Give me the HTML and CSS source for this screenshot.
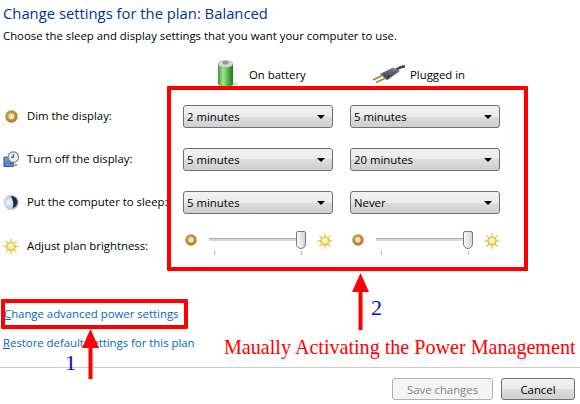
FILE: index.html
```html
<!DOCTYPE html>
<html lang="en">
<head>
<meta charset="utf-8">
<title>Change settings for the plan</title>
<link rel="stylesheet" href="styles.css">
</head>
<body>
<svg class="defs" width="0" height="0" aria-hidden="true">
  <defs>
    <radialGradient id="donut" cx="45%" cy="40%" r="60%"><stop offset="0" stop-color="#f0cf80"/><stop offset="1" stop-color="#b58428"/></radialGradient>
    <radialGradient id="sunfill" cx="50%" cy="45%" r="55%"><stop offset="0" stop-color="#fffbe0"/><stop offset="0.55" stop-color="#fdf0a0"/><stop offset="1" stop-color="#e8b830"/></radialGradient>
    <linearGradient id="cell" x1="0" x2="1" y1="0" y2="0"><stop offset="0" stop-color="#3f9a3c"/><stop offset="0.35" stop-color="#a6e38f"/><stop offset="0.7" stop-color="#45b03c"/><stop offset="1" stop-color="#1f7a24"/></linearGradient>
    <linearGradient id="plugbody" x1="0" x2="0" y1="0" y2="1"><stop offset="0" stop-color="#7d828d"/><stop offset="1" stop-color="#2f323a"/></linearGradient>
    <linearGradient id="screen" x1="0" x2="1" y1="0" y2="1"><stop offset="0" stop-color="#7fa6e6"/><stop offset="1" stop-color="#2d5bb5"/></linearGradient>
    <radialGradient id="orb" cx="35%" cy="50%" r="65%"><stop offset="0" stop-color="#f4f6fa"/><stop offset="0.7" stop-color="#b9c6dc"/><stop offset="1" stop-color="#8c9cb8"/></radialGradient>
    <symbol id="i-donut" viewBox="0 0 13 13"><circle cx="6.5" cy="6.5" r="4.4" fill="none" stroke="url(#donut)" stroke-width="3.6"/><circle cx="6.5" cy="6.5" r="2.2" fill="#e4e0d6"/></symbol>
    <symbol id="i-sun" viewBox="0 0 16 16"><g stroke="#ecd070" stroke-width="1.6" stroke-linecap="round"><path d="M8 .8v2M8 13.2v2M.8 8h2M13.2 8h2M2.9 2.9l1.4 1.4M11.7 11.7l1.4 1.4M2.9 13.1l1.4-1.4M11.7 4.3l1.4-1.4"/></g><circle cx="8" cy="8" r="4.3" fill="url(#sunfill)" stroke="#dca92c" stroke-width=".8"/></symbol>
    <symbol id="i-clock" viewBox="0 0 17 18"><path d="M1 6.5h10v10H1z" fill="url(#screen)" stroke="#2b4f9a"/><path d="M3 15h12" stroke="#7f8fb0" stroke-width="1.6"/><circle cx="11" cy="6.5" r="5.6" fill="#e8edf2" stroke="#75808c" stroke-width="1.2"/><path d="M11 3.3v3.4h-2.6" fill="none" stroke="#2a3550" stroke-width="1.1"/></symbol>
    <symbol id="i-moon" viewBox="0 0 17 17"><circle cx="8.5" cy="8.5" r="8" fill="url(#orb)"/><path d="M8.5 2c3.5-.4 6.7 2 6.7 6 0 3.600-2.400 5.800-5 6.300 1.500-3 .8-8.300-1.700-12.300z" fill="#1d2740"/></symbol>
    <symbol id="i-battery" viewBox="0 0 22 27"><ellipse cx="13" cy="24" rx="8" ry="2.500" fill="#c9c9c9" opacity=".7"/><path d="M1 4v20c0 1.500 3 2.500 7.500 2.500S16 25.500 16 24V4z" fill="url(#cell)"/><ellipse cx="8.500" cy="4" rx="7.500" ry="3.400" fill="#d5dcd8" stroke="#8aa58c" stroke-width=".6"/><ellipse cx="8.500" cy="2.800" rx="3" ry="1.800" fill="#8b9698"/></symbol>
    <symbol id="i-plug" viewBox="0 0 33 18"><path d="M23 6C26 3 29 1.500 33 1.500" fill="none" stroke="#3c4048" stroke-width="2.600"/><path d="M8 9 21 2.500 28 6 15 15z" fill="url(#plugbody)"/><path d="M1 15 11 10M4 17.500 14 13" stroke="#ad8436" stroke-width="1.800"/></symbol>
  </defs>
</svg>

<div class="page">
  <h1 class="title">Change settings for the plan: Balanced</h1>
  <p class="intro">Choose the sleep and display settings that you want your computer to use.</p>

  <div class="grid">
    <div></div>
    <div class="colhead colhead-battery"><svg class="ico-battery"><use href="#i-battery"/></svg><span>On battery</span></div>
    <div class="colhead colhead-plug"><svg class="ico-plug"><use href="#i-plug"/></svg><span>Plugged in</span></div>

    <div class="label"><svg class="ico ico-sm"><use href="#i-donut"/></svg><span>Dim the display:</span></div>
    <div class="select"><span>2 minutes</span><i class="caret"></i></div>
    <div class="select"><span>5 minutes</span><i class="caret"></i></div>

    <div class="label"><svg class="ico"><use href="#i-clock"/></svg><span>Turn off the display:</span></div>
    <div class="select"><span>5 minutes</span><i class="caret"></i></div>
    <div class="select"><span>20 minutes</span><i class="caret"></i></div>

    <div class="label"><svg class="ico"><use href="#i-moon"/></svg><span>Put the computer to sleep:</span></div>
    <div class="select"><span>5 minutes</span><i class="caret"></i></div>
    <div class="select"><span>Never</span><i class="caret"></i></div>

    <div class="label"><svg class="ico"><use href="#i-sun"/></svg><span>Adjust plan brightness:</span></div>
    <div class="slider">
      <svg class="donut"><use href="#i-donut"/></svg>
      <div class="track"><i class="tick tick-a"></i><i class="tick tick-b"></i><i class="thumb"></i></div>
      <svg class="sun"><use href="#i-sun"/></svg>
    </div>
    <div class="slider">
      <svg class="donut"><use href="#i-donut"/></svg>
      <div class="track"><i class="tick tick-a"></i><i class="tick tick-b"></i><i class="thumb"></i></div>
      <svg class="sun"><use href="#i-sun"/></svg>
    </div>
  </div>

  <div class="links">
    <a class="link link-advanced" href="#"><u>C</u>hange advanced power settings</a>
    <a class="link" href="#"><u>R</u>estore default settings for this plan</a>
  </div>

  <div class="footer">
    <button class="btn btn-disabled" type="button" disabled>Save changes</button>
    <button class="btn" type="button">Cancel</button>
  </div>

  <div class="mark mark-main"></div>
  <div class="mark mark-link"></div>
  <svg class="arrow arrow-1" viewBox="0 0 17 51"><path d="M8.500 0 17 19H10.500V50H6.500V19H0z" fill="#f00"/></svg>
  <svg class="arrow arrow-2" viewBox="0 0 17 58"><path d="M8.500 0 17 19H10.500V57H6.500V19H0z" fill="#f00"/></svg>
  <span class="note note-1">1</span>
  <span class="note note-2">2</span>
  <span class="caption">Maually Activating the Power Management</span>
</div>
</body>
</html>
```
FILE: styles.css
```css
* { box-sizing: border-box; }
html, body { margin: 0; padding: 0; background: #fff; }
body { font-family: "Open Sans", "Noto Sans", sans-serif; font-size: 11.35px; color: #000; }
.defs { position: absolute; }
.page { position: relative; width: 580px; height: 404px; overflow: hidden; display: flex; flex-direction: column; }

.title { margin: 0; padding-left: 3px; height: 28px; font-size: 14.8px; line-height: 26px; font-weight: 400; color: #003399; white-space: nowrap; }
.intro { margin: 0; padding-left: 3px; height: 32px; line-height: 15px; white-space: nowrap; }

.grid { display: grid; grid-template-columns: 163px 150px 150px; column-gap: 17px; grid-template-rows: 25px 23px 23px 23px 25px; row-gap: 20px; padding-left: 3px; }
.colhead { display: flex; align-items: center; height: 26px; }
.colhead-battery { padding-left: 34px; gap: 15px; }
.colhead-plug { padding-left: 22px; gap: 5px; }
.colhead span { position: relative; top: 1px; }
.ico-battery { width: 22px; height: 27px; margin-right: -5px; flex: none; }
.ico-plug { width: 33px; height: 18px; margin-top: 1px; flex: none; }

.label { display: flex; align-items: center; gap: 8px; white-space: nowrap; }
.label > span { position: relative; top: -1px; }
.ico { width: 16px; height: 17px; flex: none; }
.ico-sm { width: 13px; height: 13px; margin: 0 1px 0 2px; }

.select { display: flex; align-items: center; justify-content: space-between; height: 23px; padding: 0 7px 0 3px; border: 1px solid #707070; border-radius: 3px; background: linear-gradient(#f2f2f2 0, #ebebeb 50%, #dddddd 50%, #cfcfcf 100%); }
.caret { width: 0; height: 0; border-left: 4px solid transparent; border-right: 4px solid transparent; border-top: 4px solid #000; }

.slider { display: flex; align-items: flex-start; height: 28px; margin-top: -3px; padding: 2px 0 0 2px; }
.donut { width: 12px; height: 12px; flex: none; margin-top: 1px; }
.track { position: relative; flex: none; width: 97px; height: 3px; margin: 5px 0 0 12px; background: #d6dbd6; border-top: 1px solid #a8aca8; }
.tick { position: absolute; top: 12px; width: 1px; height: 4px; background: #b5b5b5; }
.tick-a { left: 5px; }
.tick-b { left: 92px; }
.thumb { position: absolute; left: 87px; top: -8px; width: 10px; height: 18px; border: 1px solid #7a7a7a; border-radius: 2px 2px 5px 5px; background: linear-gradient(90deg, #fafafa, #d4d4d4); }
.sun { width: 16px; height: 16px; flex: none; margin: 0 0 0 11px; }

.links { display: flex; flex-direction: column; padding-left: 3px; margin-top: 47px; gap: 13px; }
.link { display: block; height: 16px; line-height: 16px; color: #0066cc; text-decoration: none; white-space: nowrap; }
.link-advanced { padding-left: 1px; }

.footer { position: absolute; left: 0; right: 0; top: 367px; height: 37px; display: flex; justify-content: flex-end; gap: 8px; padding: 10px 5px 0 0; border-top: 1px solid #cccccc; }
.btn { width: 74px; height: 22px; padding: 0; font: inherit; color: #000; border: 1px solid #707070; border-radius: 3px; background: linear-gradient(#f2f2f2 0, #ebebeb 50%, #dddddd 50%, #cfcfcf 100%); }
.btn-disabled { width: 101px; color: #838383; border-color: #adb2b5; background: #f4f4f4; }

.mark { position: absolute; border: 4px solid #f00; border-radius: 1px; }
.mark-main { left: 167px; top: 86px; width: 361px; height: 185px; }
.mark-link { left: 1px; top: 299px; width: 187px; height: 30px; }
.arrow { position: absolute; width: 17px; }
.arrow-1 { left: 82px; top: 329px; height: 51px; }
.arrow-2 { left: 352px; top: 273px; height: 58px; }
.note, .caption { position: absolute; font-family: "Liberation Serif", serif; white-space: nowrap; }
.note { font-size: 22px; line-height: 20px; color: #0000ff; }
.note-1 { left: 65px; top: 353px; }
.note-2 { left: 371px; top: 298px; }
.caption { left: 224px; top: 335px; font-size: 20.1px; line-height: 24px; color: #f00; }
```
